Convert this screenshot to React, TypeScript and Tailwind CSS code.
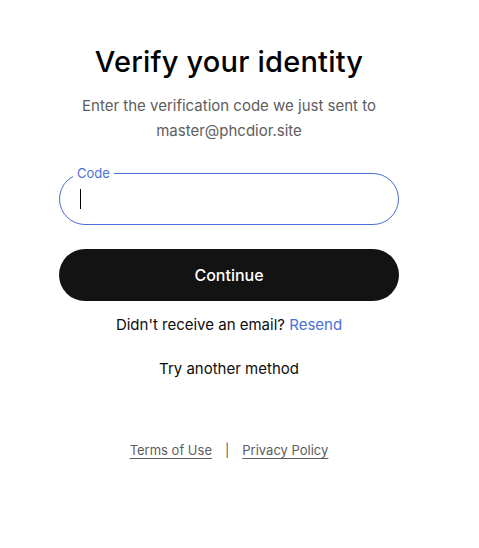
export default function App() {
  return (
    <div className="min-h-[548px] w-[479px] bg-white font-['Inter',sans-serif] text-[#0d0d0d]">
      <div className="flex w-[458px] flex-col items-center pt-[44px]">
        <h1 className="text-[29px] font-medium leading-[36px] tracking-[0.2px] text-black">Verify your identity</h1>
        <p className="mt-[13px] text-center text-[15px] leading-[25px] text-[#5d5d5d]">
          Enter the verification code we just sent to
          <br />
          master@phcdior.site
        </p>

        <div className="relative mt-[30px] h-[52px] w-[340px] rounded-full border border-[#4c6fd8]">
          <span className="absolute left-[13px] top-[-10px] bg-white px-[4px] text-[13px] leading-[18px] text-[#4c6fd8]">
            Code
          </span>
          <div className="flex h-full items-center pl-[20px]">
            <span className="h-[20px] w-px bg-black" />
          </div>
        </div>

        <button className="mt-[24px] h-[52px] w-[340px] rounded-full bg-[#131313] text-[16px] font-medium text-white">
          Continue
        </button>

        <p className="mt-[12px] text-[15px] leading-[24px]">
          Didn't receive an email? <a className="text-[#4c6fd8]">Resend</a>
        </p>

        <button className="mt-[20px] text-[15px] leading-[24px]">Try another method</button>

        <div className="mt-[59px] flex items-center gap-[13px] text-[13px] leading-[20px] text-[#5d5d5d]">
          <a className="underline underline-offset-[3px]">Terms of Use</a>
          <span>|</span>
          <a className="underline underline-offset-[3px]">Privacy Policy</a>
        </div>
      </div>
    </div>
  );
}
